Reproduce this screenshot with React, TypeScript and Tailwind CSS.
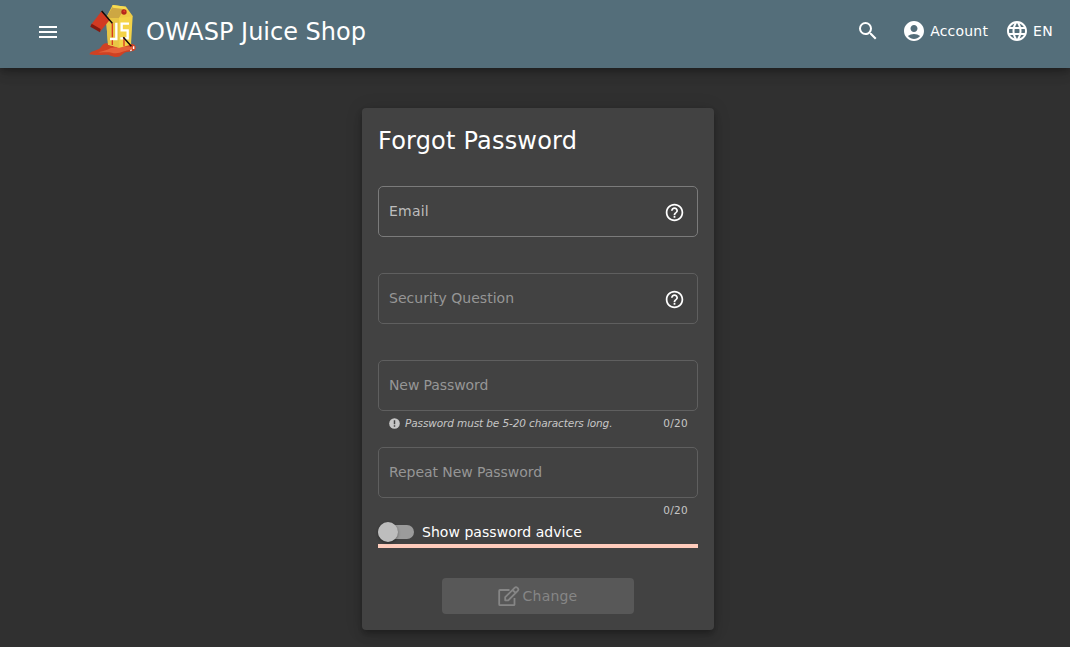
import type { ReactNode } from "react";
import { MdAccountCircle, MdHelpOutline, MdLanguage, MdMenu, MdSearch } from "react-icons/md";

function Logo() {
  return (
    <svg viewBox="0 0 192 192" className="size-16 shrink-0">
      <path d="M28 163c2-9 18-11 30-17 8-4 6-14 20-16 20-1 50 4 72 1 14-1 19 8 17 15-3 9-18 8-30 11-11 4-12 14-27 14-14 0-18-7-34-7-15 0-27 3-48-1z" fill="#cf4123" />
      <path d="M54 157c14-4 28-6 38-13 20-4 50-6 70-3-2 10-20 9-30 13-13 5-24 8-37 4-14-3-26 0-41-1z" fill="#e4613a" />
      <path d="M98 15 138 20 158 48 153 134 118 143 84 134 78 54z" fill="#f4d348" />
      <path d="M78 54 117 54 118 143 84 134z" fill="#e8c545" />
      <path d="M98 20 78 54 117 54 134 26z" fill="#cda743" />
      <path d="M98 15 138 20 136 28 98 23z" fill="#f7dc52" />
      <path d="M136 26 158 49 117 54z" fill="#efca45" />
      <circle cx="132" cy="36" r="8" fill="#b5281b" />
      <circle cx="133" cy="34" r="3" fill="#e3402a" />
      <path d="M109 68v49H90M147 71H125v20h18v24H121" stroke="#fff" strokeWidth="7" fill="none" />
      <path d="M97 70v42M97 121v14M132 112v27" stroke="#d83a20" strokeWidth="4" />
      <path d="M65 33 89 60 60 95 32 76z" fill="#d23a22" />
      <path d="M35 71 62 87 60 97 31 80z" fill="#85190f" />
      <path d="M65 33 97 70M130 112 154 139" stroke="#120b09" strokeWidth="4.5" />
      <path d="m151 152 4-3M161 139v8" stroke="#fff" strokeWidth="4" />
    </svg>
  );
}

function EditIcon() {
  return (
    <svg viewBox="0 0 24 24" className="mt-px h-6 w-6 shrink-0" fill="none" stroke="currentColor" strokeWidth="1.8" strokeLinejoin="round">
      <path d="M13.5 5H4a.8.8 0 0 0-.8.8v13.6a.8.8 0 0 0 .8.8h13.7a.8.8 0 0 0 .8-.8V13" />
      <path d="m9.2 12.2 9.4-9.4a2 2 0 0 1 2.8 0l.3.3a2 2 0 0 1 0 2.8l-9.4 9.4H9.2zM16.5 4.9l3.1 3.1" />
    </svg>
  );
}

function Field({ label, active, help, spacing = "", children }: { label: string; active?: boolean; help?: boolean; spacing?: string; children?: ReactNode }) {
  return (
    <div className="h-[87px]">
      <div className={`flex h-[51px] items-center justify-between rounded-[5px] border pl-2.5 pr-3 ${active ? "border-[#7b7b7b] text-[#bdbdbd]" : "border-[#5f5f5f] text-[#969696]"}`}>
        <span className={`mb-0.5 text-sm leading-5 ${spacing}`}>{label}</span>
        {help && <MdHelpOutline className="mt-0.5 size-[21px] text-white" />}
      </div>
      <div className="flex h-[25px] items-center px-[10px] text-[10.5px] text-[#c6c6c6]">{children}</div>
    </div>
  );
}

function Counter() {
  return <span className="ml-auto tracking-[0.3px]">0/20</span>;
}

export default function App() {
  return (
    <div className="flex h-[647px] w-full flex-col overflow-hidden bg-[#303030] font-['DejaVu_Sans',sans-serif] text-sm text-white">
      <header className="z-10 flex h-[68px] shrink-0 items-center bg-[#546e7a] pl-9 pr-[17px] shadow-[0_3px_5px_-1px_rgba(0,0,0,0.2),0_6px_10px_0_rgba(0,0,0,0.14),0_1px_18px_0_rgba(0,0,0,0.12)]">
        <MdMenu className="mt-[-4px] size-6" />
        <div className="ml-5 flex h-full items-start"><Logo /></div>
        <span className="mb-1 ml-[2px] text-2xl">OWASP Juice Shop</span>
        <div className="mb-1.5 ml-auto flex items-center">
          <MdSearch className="size-6" />
          <MdAccountCircle className="ml-[22px] size-6" />
          <span className="ml-1 tracking-[0.2px]">Account</span>
          <MdLanguage className="ml-[17px] size-6" />
          <span className="ml-1 tracking-[0.3px]">EN</span>
        </div>
      </header>
      <main className="ml-[362px] mt-10 h-[522px] w-[352px] rounded bg-[#424242] px-4 shadow-[0_3px_5px_-1px_rgba(0,0,0,0.2),0_6px_10px_0_rgba(0,0,0,0.14),0_1px_18px_0_rgba(0,0,0,0.12)]">
        <h1 className="h-[78px] pt-[17px] text-2xl tracking-[0.2px]">Forgot Password</h1>
        <Field label="Email" active help spacing="tracking-[0.2px]" />
        <Field label="Security Question" help spacing="tracking-[0.03px]" />
        <Field label="New Password" spacing="tracking-[-0.1px]">
          <svg viewBox="0 0 12 12" className="ml-px mr-[5px] size-[11px]">
            <circle cx="6" cy="6" r="5.8" fill="#c6c6c6" />
            <path d="M6 2.5v4.2M6 8v1.5" stroke="#424242" strokeWidth="1.6" />
          </svg>
          <i className="tracking-[-0.11px]">Password must be 5-20 characters long.</i>
          <Counter />
        </Field>
        <Field label="Repeat New Password" spacing="tracking-[-0.06px]"><Counter /></Field>
        <div className="-mt-[14px] flex h-6 items-center">
          <div className="mr-2 flex h-[14px] w-9 items-center rounded-full bg-[#9b9b9b]">
            <div className="size-5 shrink-0 rounded-full bg-[#bdbdbd] shadow-[0_1px_3px_rgba(0,0,0,0.4)]" />
          </div>
          <span className="tracking-[0.04px]">Show password advice</span>
        </div>
        <div className="h-1 bg-[#ffccbc]" />
        <button className="mx-auto mt-[30px] flex h-9 w-48 items-center justify-center rounded bg-[#585858] pr-[3px] text-[#868686]" disabled>
          <EditIcon />
          <span className="ml-[3px] tracking-[0.2px]">Change</span>
        </button>
      </main>
    </div>
  );
}
